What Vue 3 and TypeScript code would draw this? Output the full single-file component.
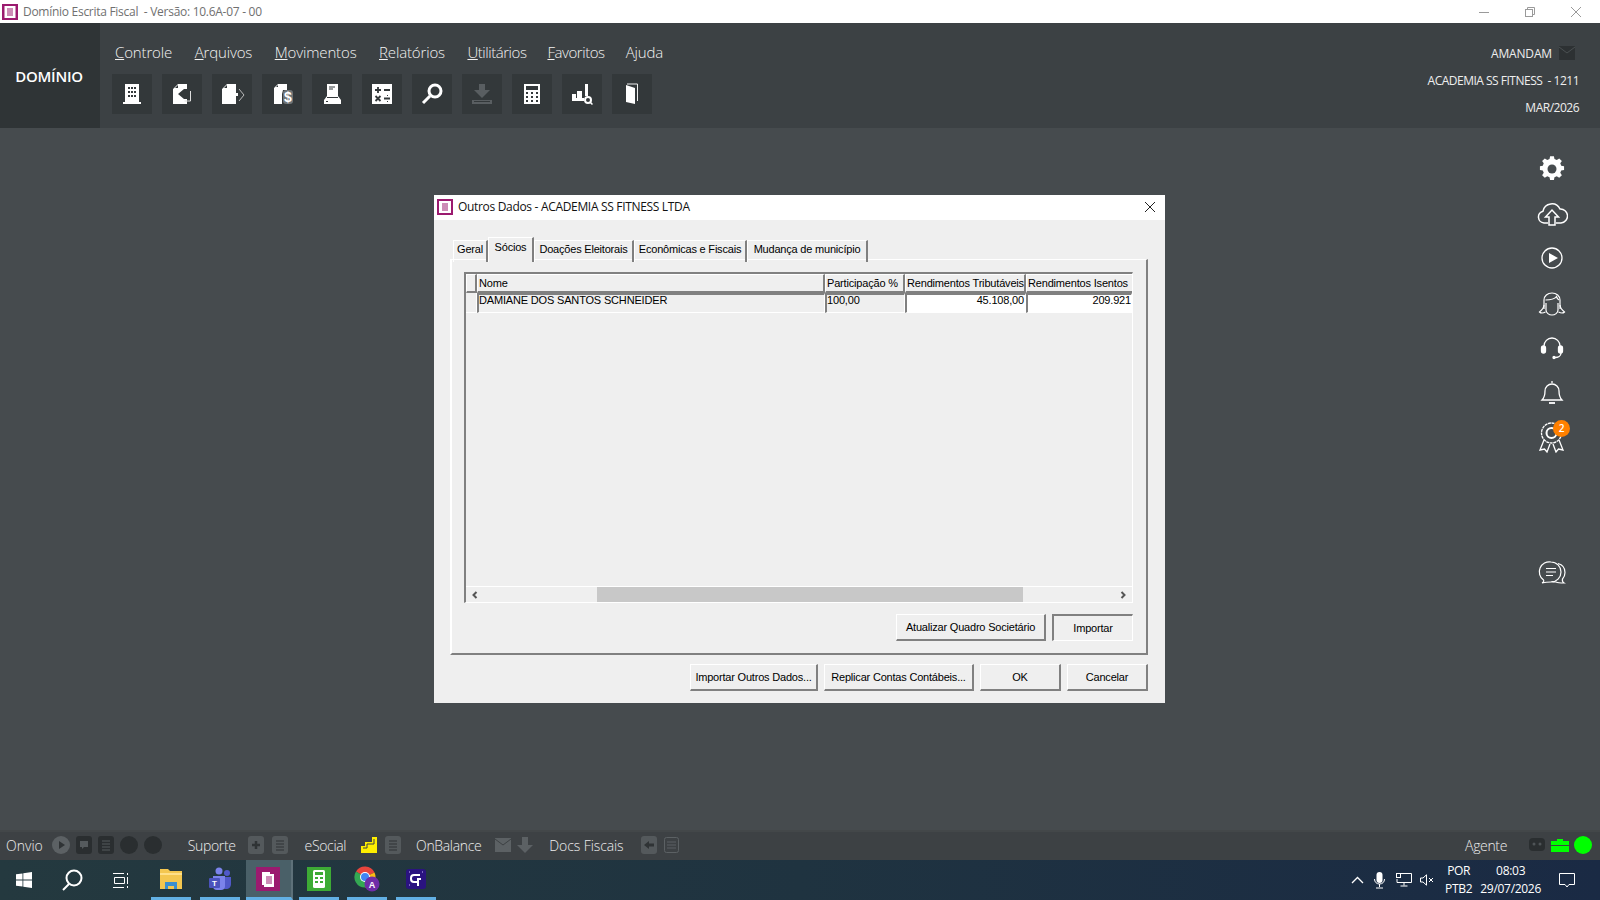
<script setup lang="ts">
const menus: [string, string][] = [
  ['C', 'ontrole'], ['A', 'rquivos'], ['M', 'ovimentos'], ['R', 'elatórios'],
  ['U', 'tilitários'], ['F', 'avoritos'], ['', 'Ajuda'],
]
const tabs = [
  { label: 'Geral', w: 35 }, { label: 'Sócios', w: 46, active: true },
  { label: 'Doações Eleitorais', w: 100 }, { label: 'Econômicas e Fiscais', w: 113 },
  { label: 'Mudança de município', w: 121 },
]
</script>

<template>
  <div class="screen">
    <div class="titlebar">
      <svg class="app-ico" viewBox="0 0 16 16"><rect width="16" height="16" fill="#9b1a6f"/><rect x="2.5" y="2" width="11" height="12" fill="#fff"/><path d="M5 5h6M5 7h6M5 9h6M5 11h6" stroke="#9b1a6f"/></svg>
      <span class="app-title">Domínio Escrita Fiscal&nbsp; - Versão: 10.6A-07 - 00</span>
      <div class="winctl">
        <svg width="12" height="12" viewBox="0 0 12 12"><path d="M1 6.5h10" stroke="#9a9a9a"/></svg>
        <svg width="12" height="12" viewBox="0 0 12 12" fill="none" stroke="#9a9a9a"><rect x="1.5" y="3.5" width="7" height="7"/><path d="M3.5 3.500v-2h7v7h-2"/></svg>
        <svg width="12" height="12" viewBox="0 0 12 12"><path d="M1 1l10 10M11 1L1 11" stroke="#9a9a9a"/></svg>
      </div>
    </div>

    <header class="header">
      <div class="brand">DOMÍNIO</div>
      <div class="head-center">
        <nav class="menu">
          <span v-for="m in menus" :key="m[1]"><u v-if="m[0]">{{ m[0] }}</u>{{ m[1] }}</span>
        </nav>
        <div class="toolbar">
          <button class="tool"><svg viewBox="0 0 40 40"><path d="M13 10h14v18h2v2H11v-2h2z" fill="#fff"/><path d="M16 13h2v2h-2zM19 13h2v2h-2zM22 13h2v2h-2zM16 17h2v2h-2zM19 17h2v2h-2zM22 17h2v2h-2zM16 21h2v2h-2zM19 21h2v2h-2zM22 21h2v2h-2z" fill="#33383a"/></svg></button>
          <button class="tool"><svg viewBox="0 0 40 40"><path d="M16 10h9v5h-3l-6 5 6 5h3v5H11V15z" fill="#fff"/><path d="M13 14l3-3v3z" fill="#33383a"/><path d="M28.500 17v10h-6" fill="none" stroke="#ddd"/></svg></button>
          <button class="tool"><svg viewBox="0 0 40 40"><path d="M15 10h9v9h2v3h-2v8H10V15z" fill="#fff"/><path d="M12 14l3-3v3z" fill="#33383a"/><path d="M27 15l5 6-5 6" fill="none" stroke="#bbb"/></svg></button>
          <button class="tool"><svg viewBox="0 0 40 40"><path d="M16 10h9v6h-4l-1 4v10h-8V14z" fill="#fff"/><path d="M14 13l2-2v2z" fill="#33383a"/><rect x="21" y="16" width="10" height="14" rx="3" fill="#6f7476"/><text x="26" y="28" class="dollar">$</text></svg></button>
          <button class="tool"><svg viewBox="0 0 40 40"><path d="M15 10h11v13H15z" fill="#fff"/><path d="M17 13h6M17 15h4" stroke="#33383a"/><path d="M12 26l3-4v2h11v-2l3 4v4H12z" fill="#fff"/><path d="M14 27.500h2" stroke="#33383a"/></svg></button>
          <button class="tool"><svg viewBox="0 0 40 40"><rect x="10" y="10" width="20" height="20" fill="#fff"/><path d="M13 16h6M16 13v6M22 16h6M13.500 22l5 5M18.500 22l-5 5M22 24.500h6" stroke="#33383a" stroke-width="1.800"/><path d="M25 21.500h1M25 27.500h1" stroke="#33383a"/></svg></button>
          <button class="tool"><svg viewBox="0 0 40 40"><circle cx="23" cy="17" r="6" fill="none" stroke="#fff" stroke-width="3"/><path d="M18 22l-7 7" stroke="#fff" stroke-width="3"/></svg></button>
          <button class="tool"><svg viewBox="0 0 40 40"><path d="M17 10h6v6h5l-8 8-8-8h5z" fill="#595e61"/><path d="M10 26h20v4H10z" fill="#595e61"/><path d="M12 27.500h16" stroke="#33383a"/></svg></button>
          <button class="tool"><svg viewBox="0 0 40 40"><rect x="12" y="10" width="16" height="20" fill="#fff"/><rect x="14" y="12" width="12" height="4" fill="#33383a"/><path d="M14 18h2v2h-2zM19 18h2v2h-2zM24 18h2v2h-2zM14 22h2v2h-2zM19 22h2v2h-2zM24 22h2v2h-2zM14 26h2v2h-2zM19 26h2v2h-2zM24 26h2v2h-2z" fill="#33383a"/></svg></button>
          <button class="tool"><svg viewBox="0 0 40 40"><path d="M10 20h4v4h-4zM15 17h5v7h-5zM23 10h3v12h-3zM10 24h12v3H10z" fill="#fff"/><circle cx="26" cy="26" r="3" fill="none" stroke="#fff" stroke-width="2"/><path d="M28 28l2.500 2.500" stroke="#fff" stroke-width="1.500"/></svg></button>
          <button class="tool"><svg viewBox="0 0 40 40"><path d="M14 11l9 3v16l-9-2z" fill="#fff"/><path d="M15 10h10.500v17" fill="none" stroke="#eee"/></svg></button>
        </div>
      </div>
      <div class="head-right">
        <div class="hr-row user">AMANDAM<svg class="mail" width="16" height="14" viewBox="0 0 16 14"><rect width="16" height="14" fill="#2d3133"/><path d="M0 1l8 6 8-6" fill="none" stroke="#4b5052"/></svg></div>
        <div class="hr-row">ACADEMIA SS FITNESS&nbsp; - 1211</div>
        <div class="hr-row">MAR/2026</div>
      </div>
    </header>

    <main class="desk">
      <div class="dialog">
        <div class="dlg-title">
          <svg class="dlg-ico" viewBox="0 0 16 16"><rect width="16" height="16" fill="#9b1a6f"/><rect x="2" y="2" width="12" height="12" fill="#fff"/><path d="M5 5h6M5 7h6M5 9h6M5 11h6" stroke="#9b1a6f"/></svg>
          <span>Outros Dados - ACADEMIA SS FITNESS LTDA</span>
          <svg class="dlg-x" width="12" height="12" viewBox="0 0 12 12"><path d="M1 1l10 10M11 1L1 11" stroke="#222"/></svg>
        </div>
        <div class="dlg-body">
          <div class="tabs">
            <div v-for="t in tabs" :key="t.label" class="tab" :class="{ 'tab-on': t.active }" :style="{ width: t.w + 'px' }">{{ t.label }}</div>
          </div>
          <div class="panel">
            <div class="grid">
              <div class="g-row g-head">
                <div class="cell"></div>
                <div class="cell">Nome</div>
                <div class="cell">Participação %</div>
                <div class="cell">Rendimentos Tributáveis</div>
                <div class="cell">Rendimentos Isentos</div>
              </div>
              <div class="g-row g-data">
                <div class="cell ind"></div>
                <div class="cell">DAMIANE DOS SANTOS SCHNEIDER</div>
                <div class="cell">100,00</div>
                <div class="cell num">45.108,00</div>
                <div class="cell num last">209.921</div>
              </div>
              <div class="g-fill"></div>
              <div class="scroll">
                <svg class="arrow" width="8" height="8" viewBox="0 0 8 8"><path d="M5.500 1L2.500 4l3 3" fill="none" stroke="#555" stroke-width="2"/></svg>
                <div class="thumb"></div>
                <svg class="arrow" width="8" height="8" viewBox="0 0 8 8"><path d="M2.500 1l3 3-3 3" fill="none" stroke="#555" stroke-width="2"/></svg>
              </div>
            </div>
            <div class="panel-btns">
              <button class="btn atual">Atualizar Quadro Societário</button>
              <button class="btn sunken">Importar</button>
            </div>
          </div>
          <div class="dlg-btns">
            <button class="btn b128">Importar Outros Dados...</button>
            <button class="btn b150">Replicar Contas Contábeis...</button>
            <button class="btn b81">OK</button>
            <button class="btn b81">Cancelar</button>
          </div>
        </div>
      </div>

      <aside class="side">
        <svg viewBox="0 0 32 32"><path d="M14 6h4l.6 3 2.400 1 2.600-1.700 2.800 2.800L24.700 13.500l1 2.500 3 .6v3.800l-3 .6-1 2.400 1.700 2.600-2.800 2.800-2.600-1.700-2.400 1-.6 3h-4l-.6-3-2.400-1-2.600 1.700-2.800-2.800 1.700-2.600-1-2.400-3-.6v-3.800l3-.6 1-2.500-1.700-2.400 2.800-2.800L11 10l2.400-1z" transform="translate(0.800 -2.500) scale(.95)" fill="#fff"/><circle cx="16" cy="16" r="4.500" fill="#464b4e"/></svg>
        <svg viewBox="0 0 32 32" fill="none" stroke="#fff" stroke-width="1.500"><path d="M12 25H8a6 6 0 0 1-1-11.800A9 9 0 0 1 24 11a7 7 0 0 1 1 14h-5"/><path d="M13 27v-8H9.500L16 12l6.500 7H19v8z"/></svg>
        <svg viewBox="0 0 32 32"><circle cx="16" cy="16" r="10" fill="none" stroke="#fff" stroke-width="1.300"/><path d="M13 11l9 5-9 5z" fill="#fff"/></svg>
        <svg viewBox="0 0 32 32" fill="none" stroke="#fff" stroke-width="1.200"><path d="M8 22V13a8 7 0 0 1 16 0v9"/><path d="M8 18c0 3-2 5-4.500 7 1.500 1.500 4 1 6 0M24 18c0 3 2 5 4.500 7-1.500 1.500-4 1-6 0"/><path d="M9.500 13c4 0 9-1 11-3.500 .5 2 1.500 3 2.500 3.500"/><path d="M10 16v7c0 3 3 5 6 5s6-2 6-5v-7"/></svg>
        <svg viewBox="0 0 32 32" fill="none" stroke="#fff" stroke-width="1.300"><path d="M8 17v-3a8 8 0 0 1 16 0v3"/><rect x="5.500" y="14" width="4" height="7" rx="2" fill="#fff"/><rect x="22.500" y="14" width="4" height="7" rx="2" fill="#fff"/><path d="M25 21c0 3-3 4.500-6 4.500"/><circle cx="18" cy="25.500" r="1" fill="#fff"/></svg>
        <svg viewBox="0 0 32 32" fill="none" stroke="#fff" stroke-width="1.300"><path d="M16 5v2M6 24c2-2 3-4 3-9a7 7 0 0 1 14 0c0 5 1 7 3 9z"/><path d="M13 27h6" stroke-width="1.800"/></svg>
        <div class="award">
          <svg viewBox="0 0 32 32" fill="none" stroke="#fff" stroke-width="1.300"><circle cx="15.500" cy="12" r="10" stroke-dasharray="3 .6"/><circle cx="15.500" cy="12" r="5" stroke-width="2"/><path d="M8 19l-4 10 4.500-1 2.500 3 3-8M23 19l4 10-4.500-1-2.500 3-3-8"/></svg>
          <span class="badge">2</span>
        </div>
        <svg class="chat" viewBox="0 0 32 32" fill="none" stroke="#fff" stroke-width="1.200"><path d="M15 5a10 10 0 0 1 0 20c-3 0-5 0-9 1 2-1 2-2 1.500-3A10 10 0 0 1 15 5z"/><path d="M22 6.500c4 1 7 4 7 9 0 3-1 5-2.500 6.500-.5 2 0 3 1.500 4-3 0-6 0-8-1-1.500 0-3 0-4.500-.5"/><path d="M10 11.500h10M10 15h10M10 18.500h7"/></svg>
      </aside>
    </main>

    <div class="bottombar">
      <span class="bb-txt first">Onvio</span>
      <span class="dot ml9"><svg viewBox="0 0 18 18"><path d="M7 5l6 4-6 4z" fill="#2f3335"/></svg></span>
      <span class="sq dark"><svg viewBox="0 0 16 18"><path d="M4 5h8v6H8l-2 2v-2H4z" fill="#555a5d"/></svg></span>
      <span class="sq dark ml6"><svg viewBox="0 0 16 18"><path d="M4 5h8M4 8h8M4 11h8M4 14h8" stroke="#555a5d"/></svg></span>
      <span class="dot darkdot ml6"></span>
      <span class="dot darkdot ml6"></span>
      <span class="bb-txt ml26">Suporte</span>
      <span class="sq mid ml12"><svg viewBox="0 0 16 18"><path d="M4 9h8M8 5v8" stroke="#2f3335" stroke-width="2.500"/></svg></span>
      <span class="sq mid ml8"><svg viewBox="0 0 16 18"><path d="M4 5h8M4 8h8M4 11h8M4 14h8" stroke="#2f3335"/></svg></span>
      <span class="bb-txt ml17">eSocial</span>
      <svg class="ml15" width="16" height="16" viewBox="0 0 16 16"><path d="M11 0h5v16H0V9h4V5h7z" fill="#ffee00"/><path d="M2 11h4V7h7V2" fill="none" stroke="#3d4144" stroke-width="1"/></svg>
      <span class="sq mid ml8"><svg viewBox="0 0 16 18"><path d="M4 5h8M4 8h8M4 11h8M4 14h8" stroke="#2f3335"/></svg></span>
      <span class="bb-txt ml15">OnBalance</span>
      <svg class="ml14" width="16" height="14" viewBox="0 0 16 14"><rect width="16" height="14" fill="#5c6164"/><path d="M0 1l8 6 8-6" fill="none" stroke="#3d4144"/></svg>
      <svg class="ml6" width="16" height="16" viewBox="0 0 16 16"><path d="M5 0h6v8h5l-8 8-8-8h5z" fill="#5c6164"/></svg>
      <span class="bb-txt docs ml16">Docs Fiscais</span>
      <span class="sq mid ml17"><svg viewBox="0 0 16 18"><path d="M3 9l5-4v2.500h5v3H8V13z" fill="#2f3335"/></svg></span>
      <svg class="ml5" width="19" height="18" viewBox="0 0 19 18" fill="none" stroke="#5c6164"><rect x="2.500" y="1.500" width="14" height="15" rx="2"/><path d="M5 6h9M5 9h9M5 12h9"/></svg>
      <span class="bb-txt agente">Agente</span>
      <svg class="ml22" width="16" height="16" viewBox="0 0 16 16"><rect y="1" width="16" height="13" rx="4" fill="#2a2e30"/><circle cx="5" cy="7" r="1.500" fill="#4f5457"/><circle cx="11" cy="7" r="1.500" fill="#4f5457"/></svg>
      <svg class="ml6" width="18" height="14" viewBox="0 0 18 14"><path d="M6 3V1h6v2h6v4H0V3zM0 8h18v6H0z" fill="#00ff00"/></svg>
      <span class="green"></span>
    </div>

    <div class="taskbar">
      <span class="tb-slot s48"><svg width="16" height="16" viewBox="0 0 16 16"><path d="M0 2.300l6.500-.9v6.200H0zM7.300 1.300L16 0v7.600H7.300zM0 8.400h6.500v6.200L0 13.700zM7.300 8.400H16V16l-8.700-1.300z" fill="#fff"/></svg></span>
      <span class="tb-slot s48"><svg width="22" height="22" viewBox="0 0 22 22" fill="none" stroke="#fff" stroke-width="2"><circle cx="13" cy="9" r="7.500"/><path d="M8 15l-6 6"/></svg></span>
      <span class="tb-slot s48"><svg width="17" height="17" viewBox="0 0 17 17" fill="none" stroke="#fff"><path d="M1 1.500h11M1 15.500h11M2.500 5.500h10v6h-10zM15.500 1v2M15.500 5v7M15.500 14v2"/></svg></span>
      <span class="tb-app open first-app"><svg width="24" height="24" viewBox="0 0 24 24"><path d="M1 2h8l2 2h12v18H1z" fill="#f4c750"/><path d="M1 6h22v2H1z" fill="#ffe08a"/><path d="M6 22v-7h12v7h-3v-3H9v3z" fill="#3a8fd0"/></svg></span>
      <span class="tb-app open"><svg width="24" height="24" viewBox="0 0 24 24"><circle cx="11" cy="4" r="3.500" fill="#7b83eb"/><circle cx="19" cy="6" r="3" fill="#5059c9"/><path d="M15 10h8v7c0 3-2 5-5 5s-3-1-3-1z" fill="#5059c9"/><path d="M5 9h12v10a4 4 0 0 1-4 4H9a4 4 0 0 1-4-4z" fill="#7b83eb"/><rect x="1" y="11" width="11" height="10" rx="1" fill="#4b53bc"/><text x="6.500" y="19" class="t-t">T</text></svg></span>
      <span class="tb-app active"><svg width="24" height="24" viewBox="0 0 24 24"><rect width="24" height="24" fill="#9b1a6f"/><path d="M6 5h8v2h4v13H8v-2H6z" fill="#fff"/><path d="M10 10h6M10 12h6M10 14h6M10 16h6" stroke="#9b1a6f"/></svg></span>
      <span class="tb-app open gap-left"><svg width="24" height="24" viewBox="0 0 24 24"><rect width="24" height="24" fill="#3dab35"/><rect x="6" y="3" width="12" height="18" rx="1.500" fill="#fff"/><rect x="8" y="5" width="8" height="3" fill="#3dab35"/><path d="M8 10h3v2H8zM13 10h3v2h-3zM8 14h3v2H8zM13 14h3v2h-3z" fill="#3dab35"/></svg></span>
      <span class="tb-app open"><svg width="26" height="26" viewBox="0 0 26 26"><path d="M11 11L2 5.500A10.500 10.500 0 0 1 20.500 6.500z" fill="#e8453c"/><path d="M11 11L20.500 6.500A10.500 10.500 0 0 1 11 21.500z" fill="#f9bc15"/><path d="M11 11V21.500A10.500 10.500 0 0 1 2 5.500z" fill="#34a853"/><circle cx="11" cy="11" r="5" fill="#fff"/><circle cx="11" cy="11" r="4" fill="#4285f4"/><circle cx="18" cy="18" r="7.500" fill="#6f2da8"/><text x="18" y="21.500" class="t-a">A</text></svg></span>
      <span class="tb-app open"><svg width="20" height="20" viewBox="0 0 20 20"><rect width="20" height="20" rx="3" fill="#2a1380"/><path d="M14 6H8a3 3 0 0 0-3 3v1a3 3 0 0 0 3 3h3M12 9v8M12 10h3" fill="none" stroke="#fff" stroke-width="2"/><path d="M3 3h1M16 3h1M3 16h1" stroke="#c9b8ff"/></svg></span>

      <div class="tray">
        <svg class="t1" width="13" height="8" viewBox="0 0 13 8"><path d="M1 7l5.500-5.500L12 7" fill="none" stroke="#fff" stroke-width="1.300"/></svg>
        <svg class="t2" width="11" height="17" viewBox="0 0 11 17"><rect x="2.500" y="0" width="6" height="11" rx="3" fill="#fff"/><path d="M.5 7c0 3 2 5 5 5s5-2 5-5M5.500 12v3M2 16h7" fill="none" stroke="#fff"/></svg>
        <svg class="t3" width="16" height="14" viewBox="0 0 16 14" fill="none" stroke="#fff"><path d="M3 .5h12.500v9H1V6M8 9.500v3M4.500 13h7"/><rect x=".5" y=".5" width="4" height="4"/></svg>
        <svg class="t4" width="14" height="12" viewBox="0 0 14 12" fill="none" stroke="#fff"><path d="M.5 4h2.500L6.500.8v10.400L3 8H.5z"/><path d="M9 4l4 4M13 4l-4 4"/></svg>
        <div class="tt lang"><span>POR</span><span>PTB2</span></div>
        <div class="tt clock"><span>08:03</span><span>29/07/2026</span></div>
        <svg class="t5" width="16" height="16" viewBox="0 0 16 16"><path d="M.5 1.500h15v11H10l-2 2.500-2-2.500H.5z" fill="none" stroke="#fff"/></svg>
      </div>
    </div>
  </div>
</template>

<style scoped>
.screen { width: 1600px; height: 900px; display: flex; flex-direction: column; overflow: hidden; font-family: "Open Sans", "Liberation Sans", sans-serif; background: #464b4e; }
.titlebar { height: 23px; background: #fff; display: flex; align-items: center; padding-left: 2px; flex: none; }
.app-ico { width: 16px; height: 16px; }
.app-title { margin-left: 5px; font-size: 12px; color: #707070; letter-spacing: -.28px; }
.winctl { margin-left: auto; display: flex; gap: 34px; padding-right: 18px; }
.header { height: 105px; flex: none; background: #3c4144; display: flex; color: #fff; }
.brand { width: 100px; background: #2f3436; display: flex; align-items: center; justify-content: center; font-size: 15px; font-weight: 600; letter-spacing: -.25px; padding: 1px 2px 0 0; box-sizing: border-box; }
.head-center { display: flex; flex-direction: column; padding-left: 12px; }
.menu { height: 51px; display: flex; align-items: center; gap: 22.500px; padding: 7px 0 0 3px; box-sizing: border-box; font-size: 15px; font-weight: 300; color: #f2f2f2; letter-spacing: -.14px; }
.menu span:nth-child(5), .menu span:nth-child(6) { letter-spacing: -.45px; margin-right: -1.500px; }
.toolbar { display: flex; gap: 10px; }
.tool { width: 40px; height: 40px; padding: 0; border: 0; background: #33383a; display: block; }
.tool svg { width: 40px; height: 40px; display: block; }
.dollar { font: bold 14px "Liberation Sans", sans-serif; fill: #fff; text-anchor: middle; }
.head-right { margin-left: auto; padding: 16.500px 21px 0 0; display: flex; flex-direction: column; align-items: flex-end; font-size: 12px; color: #eee; letter-spacing: -.5px; }
.hr-row { height: 27px; display: flex; align-items: center; }
.user { letter-spacing: -.15px; }
.mail { margin: 0 4px 0 7px; }

.desk { flex: 1; position: relative; display: flex; justify-content: flex-end; min-height: 0; }
.dialog { position: absolute; left: 434px; top: 67px; width: 731px; height: 508px; background: #efefef; display: flex; flex-direction: column; font-family: "Liberation Sans", sans-serif; font-size: 11px; color: #000; }
.dlg-title { height: 25px; background: #fff; display: flex; align-items: center; padding: 0 0 2px 3px; box-sizing: border-box; flex: none; font-family: "Open Sans", sans-serif; font-size: 12px; letter-spacing: -.32px; color: #111; }
.dlg-ico { width: 16px; height: 16px; margin-right: 5px; }
.dlg-x { margin-left: auto; margin-right: 9px; }
.dlg-body { flex: 1; padding: 17px 17px 12px 16px; display: flex; flex-direction: column; min-height: 0; }
.tabs { height: 25px; display: flex; padding-left: 3px; align-items: flex-end; flex: none; margin-bottom: -3px; position: relative; z-index: 1; }
.tab { height: 22px; box-sizing: border-box; display: flex; align-items: center; justify-content: center; border-top: 1px solid #fff; border-left: 1px solid #fff; border-right: 2px solid #808080; white-space: nowrap; font-size: 11px; letter-spacing: -.2px; padding-bottom: 5px; }
.tab-on { height: 25px; background: #efefef; padding-bottom: 7px; }
.panel { flex: 1; min-height: 0; box-sizing: border-box; border-top: 1px solid #fff; border-left: 2px solid #fff; border-right: 2px solid #808080; border-bottom: 2px solid #808080; padding: 12px 13px 12px 12px; display: flex; flex-direction: column; margin-top: 0; }
.grid { flex: 1; min-height: 0; box-sizing: border-box; border-top: 2px solid #808080; border-left: 2px solid #808080; border-bottom: 1px solid #fff; border-right: 1px solid #fff; display: flex; flex-direction: column; overflow: hidden; }
.g-row { display: grid; grid-template-columns: 11px 348px 80px 121px 1fr; flex: none; height: 19px; }
.cell { box-sizing: border-box; white-space: nowrap; overflow: hidden; font-size: 11px; padding-left: 1px; letter-spacing: -.18px; }
.g-head .cell { border-top: 1px solid #fff; border-left: 1px solid #fff; border-right: 2px solid #808080; border-bottom: 2px solid #808080; line-height: 16px; }
.g-head .cell:last-child { border-right: 0; }
.g-data { height: 20px; }
.g-data .cell { border-top: 2px solid #808080; border-left: 2px solid #808080; border-right: 1px solid #fff; border-bottom: 1px solid #fff; line-height: 11px; padding-left: 0; }
.g-data .cell:nth-child(2) { letter-spacing: -.17px; }
.g-data .ind { border: 0; border-right: 1px solid #fff; border-bottom: 1px solid #fff; }
.num { background: #fff; text-align: right; padding-right: 1px; }
.num.last { padding-right: 0; }
.g-fill { flex: 1; }
.scroll { height: 16px; flex: none; border-top: 1px solid #fff; display: flex; align-items: center; box-sizing: border-box; }
.arrow { margin: 0 6px 0 5px; flex: none; }
.thumb { height: 15px; width: 426px; background: #c8c8c8; margin: 0 0 0 112px; }
.scroll .arrow:last-child { margin-left: auto; margin-right: 5px; }
.panel-btns { display: flex; justify-content: flex-end; gap: 6px; margin-top: 11px; flex: none; }
.btn { height: 27px; padding: 0; box-sizing: border-box; background: #efefef; border-top: 1px solid #fff; border-left: 1px solid #fff; border-right: 2px solid #808080; border-bottom: 2px solid #808080; font: 11px "Liberation Sans", sans-serif; color: #000; letter-spacing: -.2px; white-space: nowrap; }
.atual { width: 150px; }
.sunken { width: 81px; border-top: 2px solid #808080; border-left: 2px solid #808080; border-right: 1px solid #fff; border-bottom: 1px solid #fff; }
.dlg-btns { display: flex; justify-content: flex-end; gap: 6px; margin-top: 9px; flex: none; }
.b128 { width: 128px; }
.b150 { width: 150px; }
.b81 { width: 81px; }

.side { width: 96px; padding: 25px 0 0; box-sizing: border-box; display: flex; flex-direction: column; align-items: center; }
.side > svg { width: 32px; height: 32px; margin: 0 0 12.700px; display: block; flex: none; }
.side > svg.chat { margin-top: auto; margin-bottom: 241px; }
.award { position: relative; width: 32px; height: 32px; flex: none; }
.award svg { width: 32px; height: 32px; display: block; }
.badge { position: absolute; left: 17px; top: -1px; width: 17px; height: 17px; border-radius: 50%; background: #ff8000; color: #fff; font: 600 10px/17px "Open Sans", sans-serif; text-align: center; }

.bottombar { height: 30px; flex: none; background: #3d4144; display: flex; align-items: center; color: #eee; box-shadow: inset 0 2px 0 #434749; }
.bb-txt { font-size: 14px; font-weight: 300; letter-spacing: -.35px; white-space: nowrap; }
.bb-txt.first { margin-left: 6px; letter-spacing: 0; }
.bb-txt.docs { letter-spacing: -.1px; }
.dot { width: 18px; height: 18px; border-radius: 50%; background: #5c6164; flex: none; display: block; }
.dot svg { display: block; }
.darkdot { background: #2a2e30; }
.sq { width: 16px; height: 18px; border-radius: 3px; flex: none; display: block; }
.sq svg { display: block; width: 100%; height: 100%; }
.sq.dark { background: #2a2e30; margin-left: 6px; }
.sq.mid { background: #54595c; }
.ml5 { margin-left: 5px !important; } .ml6 { margin-left: 6px !important; } .ml8 { margin-left: 8px !important; }
.ml9 { margin-left: 9px; } .ml12 { margin-left: 12px; } .ml14 { margin-left: 14px; } .ml15 { margin-left: 15px; }
.ml16 { margin-left: 16px; } .ml17 { margin-left: 17px; } .ml22 { margin-left: 22px; } .ml26 { margin-left: 26px; }
.agente { margin-left: auto; }
.green { width: 18px; height: 18px; border-radius: 50%; background: #00ff00; margin: 0 8px 0 5px; flex: none; }

.taskbar { height: 40px; flex: none; background: linear-gradient(90deg, #24393f 0%, #1f3340 50%, #1a2a44 100%); display: flex; align-items: center; color: #fff; }
.tb-slot { display: flex; align-items: center; justify-content: center; height: 40px; }
.s48 { width: 48px; }
.tb-app { width: 40px; height: 40px; margin-right: 8.800px; box-sizing: border-box; display: flex; align-items: center; justify-content: center; padding-bottom: 3px; }
.first-app { margin-left: 7px; }
.open { border-bottom: 3px solid #62b0e4; padding-bottom: 0; }
.active { width: 47px; margin-right: 6px; background: #4a6068; border-bottom: 3px solid #62b0e4; border-right: 2px solid #5d7179; padding-bottom: 0; margin-left: -3px; }
.t-t { font: bold 8px "Liberation Sans", sans-serif; fill: #fff; text-anchor: middle; }
.t-a { font: bold 9px "Liberation Sans", sans-serif; fill: #fff; text-anchor: middle; }
.tray { margin-left: auto; display: flex; align-items: center; height: 40px; }
.t1 { margin-right: 10px; }
.t2 { margin-right: 11px; }
.t3 { margin-right: 8px; }
.t4 { margin-right: 11px; }
.tt { display: flex; flex-direction: column; align-items: center; font-size: 12px; line-height: 18px; letter-spacing: -.3px; }
.lang { margin-right: 8px; }
.clock { margin-right: 18px; }
.t5 { margin-right: 25px; }
</style>
